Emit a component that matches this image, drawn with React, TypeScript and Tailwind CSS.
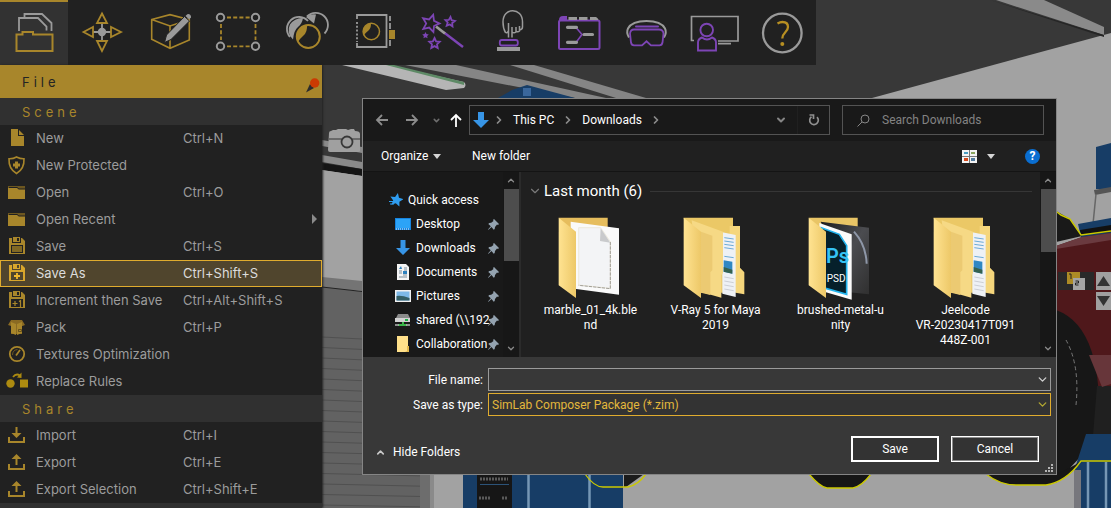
import type { ReactNode } from "react";
import { ChevronDown, ChevronRight, ChevronUp } from "lucide-react";

const GOLD = "#a8862b";
const GRAY = "#9a9a9a";
const PURPLE = "#7d45b5";

/* ---------- top toolbar ---------- */

function starPoints(cx: number, cy: number, r: number, turn = 0) {
  return Array.from({ length: 10 }, (_, i) => {
    const a = (Math.PI / 5) * i - Math.PI / 2 + turn;
    const d = i % 2 ? r * 0.48 : r;
    return `${(cx + d * Math.cos(a)).toFixed(1)},${(cy + d * Math.sin(a)).toFixed(1)}`;
  }).join(" ");
}

const tools: { label: string; icon: ReactNode }[] = [
  {
    label: "File",
    icon: (
      <>
        <path d="M24.5 17v-3h17.5l9.5 9v8M19 31V18h19l8.5 8.5v4" stroke={GRAY} strokeWidth="1.8" />
        <path d="M16.5 51V34.5h6V32h10.5v2.5h19.5V51z" stroke={GOLD} strokeWidth="2" />
      </>
    ),
  },
  {
    label: "Move",
    icon: (
      <>
        <path d="M34 23v18M25 32h18" stroke={GRAY} strokeWidth="1.8" />
        <circle cx="34" cy="32" r="4.2" fill={GRAY} />
        <path d="M34 13.5l5 9.5h-10zM34 51l-5-10h10zM15.5 32l9.5-5v10zM53 32l-10-5v10z" stroke={GOLD} strokeWidth="1.8" />
      </>
    ),
  },
  {
    label: "Edit",
    icon: (
      <>
        <path d="M15.7 19.5L34 14.700l19.3 5V40L34 48.3 15.7 39.3zM15.7 19.500L34 26l19.3-6.3M34 26v22" stroke={GOLD} strokeWidth="1.6" />
        <path d="M28.500 42.500l2-7.500L48.500 16.500l5 4.500L35 39.500z" fill={GRAY} stroke="#212121" strokeWidth="1" />
        <path d="M49.500 16l1.800-1.800q1.500-.6 2.800.5t.8 2.800L53.200 19.500z" fill={GRAY} />
      </>
    ),
  },
  {
    label: "Selection",
    icon: (
      <>
        <path d="M23 17.5h23M23 46.300h23M17 24v16M51.500 24v16" stroke={GOLD} strokeWidth="1.8" strokeDasharray="4 2.2" />
        {[16.5, 51.5].map((x) =>
          [17.5, 46.3].map((y) => (
            <circle key={`${x}-${y}`} cx={x} cy={y} r="3.7" stroke={GRAY} strokeWidth="2" />
          )),
        )}
      </>
    ),
  },
  {
    label: "Materials",
    icon: (
      <>
        <path d="M18 37a11.500 11.500 0 0 1 18-16" stroke={GRAY} strokeWidth="1.8" />
        <path d="M21 39.500a12 12 0 0 1-3-15q5-7 13-6.500-1 6-5 9t-5 12.500z" fill={GRAY} />
        <path d="M35 16.500a12 12 0 0 1 17.500 17" stroke={GRAY} strokeWidth="1.800" />
        <path d="M34 17q5-3.500 10-2.500l-2 9z" fill={GRAY} />
        <circle cx="36.300" cy="36.500" r="12.800" fill="#212121" />
        <circle cx="36.300" cy="36.500" r="11.500" stroke={GOLD} strokeWidth="2" />
        <path d="M26 42a12 12 0 0 1 9-17q.5 7-3.500 10.500T26 42z" fill={GOLD} />
      </>
    ),
  },
  {
    label: "Textures",
    icon: (
      <>
        <path d="M17 19v-4h29.500v32H17v-4" stroke={GRAY} strokeWidth="1.800" />
        <path d="M17 22v20" stroke={GRAY} strokeWidth="1.800" strokeDasharray="2 1.800" />
        <path d="M50 16v5M50 23v6M50 40v6" stroke={GRAY} strokeWidth="1.800" />
        <path d="M49 30h6v9h-6z" fill={GOLD} />
        <circle cx="31.300" cy="31.500" r="8.200" stroke={GOLD} strokeWidth="1.500" />
        <path d="M24 35a8 8 0 0 1 7-11.500q0 5-2.500 7T24 35z" fill={GOLD} />
      </>
    ),
  },
  {
    label: "Effects",
    icon: (
      <>
        <path d="M36 32.500L55 47" stroke={PURPLE} strokeWidth="2.400" />
        <path d="M28 26.500l9 7" stroke={GRAY} strokeWidth="2.800" />
        <polygon points={starPoints(22.5, 23.5, 9, 0.3)} stroke={PURPLE} strokeWidth="1.8" />
        <polygon points={starPoints(42, 22, 5, 0.1)} stroke={PURPLE} strokeWidth="1.8" />
        <polygon points={starPoints(26.5, 43.5, 5.5)} stroke={PURPLE} strokeWidth="1.8" />
        <polygon points={starPoints(17.5, 35.5, 3.5)} fill={PURPLE} />
      </>
    ),
  },
  {
    label: "Interaction",
    icon: (
      <>
        <path
          d="M32.500 37.500V23M36 37.500V27M32.500 31q-1.500 2.500-3 1.500-2.500-4-2.500-10.500C27 7 46.500 7 46.500 22v5q0 2.500-3 3v-4M43.500 27v4q-1.700 1.500-3.500 0v-4M40 28v4q-2 1.500-4 0"
          stroke={GRAY}
          strokeWidth="1.500"
        />
        <rect x="23.800" y="40" width="18" height="5.500" rx="2" stroke={PURPLE} strokeWidth="1.800" />
        <path d="M21 47h23v4H21z" fill={GRAY} />
      </>
    ),
  },
  {
    label: "Sequence",
    icon: (
      <>
        <rect x="15" y="20.500" width="40.500" height="28.500" rx="1.500" stroke={PURPLE} strokeWidth="2" />
        <path d="M15 20q0-4 4-4h4v4z" fill={PURPLE} />
        <path d="M24.500 17H33v3h-8.500zM35 17h8.500v3H35zM46 17h6q2 1 2.500 3H46z" fill={GRAY} />
        <path d="M32 27.500l6 7-6 8" stroke={PURPLE} strokeWidth="1.600" />
        <path d="M23.500 27.300h9M23.500 42.300h9M40 34.500h8.500" stroke={GRAY} strokeWidth="3.200" strokeLinecap="round" />
      </>
    ),
  },
  {
    label: "VR",
    icon: (
      <>
        <path d="M17 37.500q-3-5-1-9Q20 21 34.500 21T53 28.500q2 4-1 9" stroke={GRAY} strokeWidth="2" />
        <path d="M24 26.500h22" stroke={PURPLE} strokeWidth="2" strokeLinecap="round" />
        <path d="M22 29.500h25q4 0 4.500 4l-1 9q-.5 2.800-3 2.800h-8.500l-4.500-4-4.500 4H22q-2.500 0-3-2.800l-1-9q.5-4 4-4z" stroke={PURPLE} strokeWidth="1.800" />
      </>
    ),
  },
  {
    label: "Presentation",
    icon: (
      <>
        <path d="M14 40.500h-2.500v-24h46.500v24.500H38M38 43.700h13" stroke={GRAY} strokeWidth="1.700" />
        <circle cx="26.700" cy="30" r="6.300" fill="#212121" stroke={PURPLE} strokeWidth="1.900" />
        <path d="M22 37.500q-4 1.500-4 5v8h18v-8q0-3.500-4-5-5 4-10 0z" fill="#212121" stroke={PURPLE} strokeWidth="1.900" />
      </>
    ),
  },
  {
    label: "Help",
    icon: (
      <>
        <circle cx="34.300" cy="33" r="19.300" stroke={GRAY} strokeWidth="2.300" />
        <path d="M29.500 23.500q2.500-1.500 5-1.500c4 0 5.500 2.200 5.500 5 0 5-5.500 5-5.700 11.500" stroke="#b78f22" strokeWidth="2.300" />
        <circle cx="34.300" cy="44" r="2" fill="#b78f22" />
      </>
    ),
  },
];

function Toolbar() {
  return (
    <nav className="flex h-[65px] w-fit bg-[#212121]" aria-label="Main toolbar">
      {tools.map((tool, i) => (
        <button
          key={tool.label}
          type="button"
          aria-label={tool.label}
          className={i === 0 ? "bg-[#323232] shadow-[inset_0_2px_0_#a8862b]" : ""}
        >
          <svg width="68" height="65" viewBox="0 0 68 65" fill="none">
            {tool.icon}
          </svg>
        </button>
      ))}
    </nav>
  );
}

/* ---------- file menu ---------- */

const floppy = (
  <>
    <path d="M1 1h13l3 3v13H1z" fill={GOLD} />
    <path d="M4 0h9v6H4z" fill="#212121" />
    <path d="M5 0h7v5H5z" fill={GOLD} />
    <path d="M9 1h2v3H9z" fill="#212121" />
  </>
);

const menuIcons: Record<string, ReactNode> = {
  file: (
    <>
      <path d="M3 0h7v7h6v10H3z" fill={GOLD} />
      <path d="M11 1l5 5h-5z" fill={GOLD} />
    </>
  ),
  shield: (
    <>
      <path d="M8.500 1q4 2 7.500 1.800Q16.500 13 8.500 17.500 .5 13 1 2.800 5 3 8.500 1z" stroke={GOLD} strokeWidth="1.600" />
      <path d="M7 5.500h3v2h2v3h-2v2H7v-2H5v-3h2z" fill={GOLD} />
    </>
  ),
  folder: (
    <>
      <path d="M0 3h17v3H0z" fill="#6d5720" />
      <path d="M0 5h2l1-1h6l1 2h7v10H0z" fill={GOLD} />
      <path d="M1 4.500h8.500l1 1.500H17" stroke="#212121" fill="none" />
    </>
  ),
  save: (
    <>
      {floppy}
      <path d="M3 8h12v8H3z" fill="#212121" />
      <path d="M4 9h10v6H4z" fill="#806824" />
    </>
  ),
  saveAs: (
    <>
      <path d="M1 1h13l3 3v13H1z" fill="#d8a62c" />
      <path d="M4 0h9v6H4zM3 8h12v8H3z" fill="#50452d" />
      <path d="M5 0h7v5H5z" fill="#d8a62c" />
      <path d="M9 1h2v3H9z" fill="#50452d" />
      <path d="M9 9v6M6 12h6" stroke="#f2b92e" strokeWidth="1.800" />
    </>
  ),
  increment: (
    <>
      {floppy}
      <path d="M3 8h12v8H3z" fill="#212121" />
      <path d="M7 10v5M4.500 12.500h5M11 10.500l1.500-1V16" stroke={GOLD} strokeWidth="1.200" />
    </>
  ),
  pack: (
    <>
      <path d="M3 2h11l3 5-2.500 1H14v8H3V8L0 7z" fill="#8a6a22" />
      <path d="M3 4l5 2v11l-5-2zM9 6l5-2v11l-5 2z" fill={GOLD} />
      <path d="M10.500 11.500h3v2h-3z" stroke="#59461b" strokeWidth=".8" />
    </>
  ),
  gauge: (
    <>
      <circle cx="9" cy="9" r="7.200" stroke={GOLD} strokeWidth="1.800" />
      <path d="M8 10.500l4-5.500" stroke={GOLD} strokeWidth="1.700" />
      <path d="M4.500 10q0-5 5-5.500" stroke="#6d5720" strokeWidth="1" />
    </>
  ),
  replace: (
    <>
      <circle cx="2.500" cy="11.500" r="4.200" fill="#ad8b10" />
      <path d="M12 7.500h8v8h-8z" fill="#ad8b10" />
      <path d="M5 5q3-4 7-1.500" stroke="#ad8b10" strokeWidth="1.800" />
      <path d="M13.500.500v5.500L9 5.500z" fill="#ad8b10" />
    </>
  ),
  import: (
    <>
      <path d="M1 11v5h15v-5" stroke={GOLD} strokeWidth="2" />
      <path d="M7.500 1h2v6h4l-5 5-5-5h4z" fill={GOLD} />
    </>
  ),
  export: (
    <>
      <path d="M1 11v5h15v-5" stroke={GOLD} strokeWidth="2" />
      <path d="M7.500 12h2V6h4l-5-5-5 5h4z" fill={GOLD} />
    </>
  ),
};

type MenuItem = { icon: string; label: string; keys?: string; sub?: boolean; active?: boolean };

const sceneItems: MenuItem[] = [
  { icon: "file", label: "New", keys: "Ctrl+N" },
  { icon: "shield", label: "New Protected" },
  { icon: "folder", label: "Open", keys: "Ctrl+O" },
  { icon: "folder", label: "Open Recent", sub: true },
  { icon: "save", label: "Save", keys: "Ctrl+S" },
  { icon: "saveAs", label: "Save As", keys: "Ctrl+Shift+S", active: true },
  { icon: "increment", label: "Increment then Save", keys: "Ctrl+Alt+Shift+S" },
  { icon: "pack", label: "Pack", keys: "Ctrl+P" },
  { icon: "gauge", label: "Textures Optimization" },
  { icon: "replace", label: "Replace Rules" },
];

const shareItems: MenuItem[] = [
  { icon: "import", label: "Import", keys: "Ctrl+I" },
  { icon: "export", label: "Export", keys: "Ctrl+E" },
  { icon: "export", label: "Export Selection", keys: "Ctrl+Shift+E" },
];

function MenuHeading({ children }: { children: ReactNode }) {
  return <h3 className="flex h-[27px] items-center bg-[#303030] pl-[22px] tracking-[4px] text-[#a8862b]">{children}</h3>;
}

function MenuRow({ item }: { item: MenuItem }) {
  return (
    <button
      type="button"
      className={`flex h-[27px] w-full items-center border pr-1 pb-px pl-[7px] text-left ${
        item.active ? "border-[#e0ac2e] bg-[#50452d] text-[#dcdcdc]" : "border-transparent text-[#9c9c9c]"
      }`}
    >
      <svg width="18" height="18" viewBox="0 0 18 18" fill="none" className="shrink-0 overflow-visible">
        {menuIcons[item.icon]}
      </svg>
      <span className="ml-2.5 w-[147px] shrink-0 whitespace-nowrap">{item.label}</span>
      <span className="whitespace-nowrap">{item.keys}</span>
      {item.sub && (
        <svg width="5" height="10" viewBox="0 0 5 10" className="ml-auto">
          <path d="M0 0l5 5-5 5z" fill="#8a8a8a" />
        </svg>
      )}
    </button>
  );
}

function FileMenu() {
  return (
    <aside className="w-[322px] shrink-0 bg-[#212121] font-[Inter,sans-serif] text-[13px] leading-4 shadow-[1px_0_2px_#222]">
      <div className="flex h-[33px] items-center justify-between bg-[#a8862b] pr-0.5 pl-[22px]">
        <h2 className="tracking-[4px] text-[#242424]">File</h2>
        <button type="button" aria-label="Pin menu" className="mt-2">
          <svg width="14" height="15" viewBox="0 0 14 15">
            <path d="M0 14.500L4 6l4 4z" fill="#2c2c2c" />
            <circle cx="8.700" cy="5" r="4.700" fill="#cb3a02" />
          </svg>
        </button>
      </div>
      <MenuHeading>Scene</MenuHeading>
      {sceneItems.map((item) => (
        <MenuRow key={item.label} item={item} />
      ))}
      <MenuHeading>Share</MenuHeading>
      {shareItems.map((item) => (
        <MenuRow key={item.label} item={item} />
      ))}
      <div className="h-[5px] bg-[#303030]" />
    </aside>
  );
}

/* ---------- save dialog ---------- */

function Caret() {
  return (
    <svg width="8" height="5" viewBox="0 0 8 5">
      <path d="M0 0h8L4 5z" fill="#d5d5d5" />
    </svg>
  );
}

function ArrowIcon({ d, color }: { d: string; color: string }) {
  return (
    <svg width="14" height="14" viewBox="0 0 14 14" fill="none">
      <path d={d} stroke={color} strokeWidth="1.8" />
    </svg>
  );
}

function Crumb({ children }: { children: string }) {
  return (
    <>
      <ChevronRight size={12} strokeWidth={3.5} color="#8c8c8c" className="shrink-0" />
      <a href={`#${children}`} className="mr-2 ml-2">{children}</a>
    </>
  );
}

function AddressBar() {
  return (
    <div className="flex h-[42px] items-center bg-[#191919] pr-3 pl-3">
      <div className="flex w-[94px] shrink-0 items-center justify-between pr-1.5">
        <button type="button" aria-label="Back">
          <ArrowIcon d="M13 7H2M7 2L2 7l5 5" color="#8c8c8c" />
        </button>
        <button type="button" aria-label="Forward" className="ml-2">
          <ArrowIcon d="M1 7h11M7 2l5 5-5 5" color="#8c8c8c" />
        </button>
        <button type="button" aria-label="Recent locations" className="ml-1.5">
          <ChevronDown size={9} strokeWidth={4} color="#6e6e6e" />
        </button>
        <button type="button" aria-label="Up">
          <ArrowIcon d="M7 14V2M2 7l5-5 5 5" color="#ffffff" />
        </button>
      </div>
      <div className="flex h-[30px] grow items-center border border-[#535353] pl-[3px]">
        <svg width="16" height="16" viewBox="0 0 16 16" className="mr-1 shrink-0">
          <path d="M5 0h6v8h5l-8 8-8-8h5z" fill="#3795e6" />
        </svg>
        <Crumb>This PC</Crumb>
        <Crumb>Downloads</Crumb>
        <ChevronRight size={12} strokeWidth={3.5} color="#8c8c8c" className="shrink-0" />
        <button type="button" aria-label="Previous locations" className="mr-2.5 ml-auto">
          <ChevronDown size={12} strokeWidth={4} color="#858585" />
        </button>
        <button type="button" aria-label="Refresh" className="flex h-full w-8 items-center justify-center border-l border-[#202020]">
          <svg width="12" height="12" viewBox="0 0 12 12" fill="none">
            <path d="M3.500 2.800A4.300 4.300 0 1 0 9 3.200M1.500 1h4v4" stroke="#8f8f8f" strokeWidth="1.700" />
          </svg>
        </button>
      </div>
      <label className="ml-3 flex h-[30px] w-[202px] shrink-0 items-center border border-[#535353]">
        <svg width="13" height="13" viewBox="0 0 13 13" fill="none" className="ml-3.5 shrink-0">
          <circle cx="8" cy="5" r="4" stroke="#858585" />
          <path d="M5 8l-4.500 4.500" stroke="#858585" />
        </svg>
        <input
          type="search"
          aria-label="Search Downloads"
          placeholder="Search Downloads"
          className="ml-3 w-full min-w-0 bg-transparent outline-none placeholder:text-[#838383]"
        />
      </label>
    </div>
  );
}

function CommandBar() {
  return (
    <div className="flex h-[31px] items-center border-b border-[#141414] bg-[#202020] pr-4 pl-[18px]">
      <button type="button" className="flex w-[60px] items-center justify-between">
        Organize <Caret />
      </button>
      <button type="button" className="ml-[31px]">New folder</button>
      <button type="button" aria-label="Change view" className="ml-auto flex items-center gap-2.5">
        <svg width="15" height="13" viewBox="0 0 15 13">
          <path d="M0 0h15v13H0z" fill="#f3f3f3" />
          <path d="M7 0h1v13H7zM0 6h15v1H0z" fill="#777" />
          <path d="M2 2h4v2H2z" fill="#4a9cc0" />
          <path d="M9 2h4v2H9z" fill="#8ba55d" />
          <path d="M2 8h4v3H2z" fill="#d6471a" />
          <path d="M9 8h4v3H9z" fill="#527c9f" />
        </svg>
        <Caret />
      </button>
      <button type="button" aria-label="Help" className="ml-[30px] flex size-[15px] items-center justify-center rounded-full bg-[#0a6ed1] text-xs leading-3 font-bold">
        ?
      </button>
    </div>
  );
}

const places: { label: string; icon: ReactNode }[] = [
  {
    label: "Desktop",
    icon: (
      <>
        <path d="M0 2h16v12H0z" fill="#1684e0" />
        <path d="M1 3h14v9H1z" fill="#2ca3f7" />
        <path d="M1 13h14" stroke="#e8f4ff" strokeWidth="1" strokeDasharray="1 1" />
      </>
    ),
  },
  { label: "Downloads", icon: <path d="M5.500 0h5v8H15l-7 7-7-7h4.500z" fill="#3795e6" /> },
  {
    label: "Documents",
    icon: (
      <>
        <path d="M2 0h9l3 3v13H2z" fill="#f4f4f4" />
        <path d="M4 7h3M4 9h3M9 4h3M9 6h3M4 13h8M8 11h4" stroke="#7a8b99" />
        <path d="M4 5l2-3 1 3zM8 7h4v3H8z" fill="#2d80bd" />
      </>
    ),
  },
  {
    label: "Pictures",
    icon: (
      <>
        <path d="M0 2h16v12H0z" fill="#f1f1f1" />
        <path d="M1.500 3.500h13v9h-13z" fill="#7db9e8" />
        <path d="M1.500 8q5-1 13 2v2.500h-13z" fill="#345f66" />
      </>
    ),
  },
  {
    label: "shared (\\\\192",
    icon: (
      <>
        <path d="M3 2h10l2 4H1z" fill="#8b8b8b" />
        <path d="M0 6h15v4H0z" fill="#d3d3d3" />
        <path d="M10 7h3v2h-3z" fill="#23b14d" />
        <path d="M7 10h2v2h3v2H3v-2h4z" fill="#3cb44b" />
        <path d="M0 13h4M11 13h4" stroke="#b5b5b5" strokeWidth="1.500" />
      </>
    ),
  },
  {
    label: "Collaboration",
    icon: (
      <>
        <path d="M2 0h11v16H2z" fill="#ffe08a" />
        <path d="M12 10h2v6h-4l2-1z" fill="#e3b94f" />
      </>
    ),
  },
];

function ScrollBar({ thumb }: { thumb: string }) {
  return (
    <div className="flex w-4 shrink-0 flex-col items-center bg-[#171717]" aria-hidden="true">
      <ChevronUp size={17} strokeWidth={3} color="#8a8a8a" className="h-[17px] w-2.5 shrink-0" />
      <div className={`w-[15px] bg-[#4d4d4d] ${thumb}`} />
      <ChevronDown size={17} strokeWidth={3} color="#8a8a8a" className="mt-auto h-[17px] w-2.5 shrink-0" />
    </div>
  );
}

function PlacesPane() {
  return (
    <div className="flex w-[158px] shrink-0 border-r-2 border-[#2b2b2b] bg-[#191919]">
      <ul className="min-w-0 grow pt-4">
        <li>
          <a href="#quick-access" className="flex h-6 items-center pl-[26px]">
            <svg width="14" height="14" viewBox="0 0 14 14" className="mr-[5px] shrink-0">
              <polygon points={starPoints(7.5, 7, 7, 0.2)} fill="#2f9df0" />
              <path d="M0 8.500h4M1 11h4" stroke="#2f9df0" />
            </svg>
            Quick access
          </a>
        </li>
        {places.map((place) => (
          <li key={place.label}>
            <a href={`#${place.label}`} className="flex h-6 items-center pl-8">
              <svg width="16" height="16" viewBox="0 0 16 16" className="mr-[5px] shrink-0">
                {place.icon}
              </svg>
              <span className="w-[72px] whitespace-nowrap">{place.label}</span>
              <svg width="11" height="11" viewBox="0 0 11 11" className="shrink-0">
                <path d="M6 0l5 5-1 1-1-.4L7 8l-.3 2-1 .8L3.500 8 .5 10.800 0 10.500 2.800 7.300 .3 5l.9-1 2-.2L5.500 2 5 1z" fill="#94a3b0" />
              </svg>
            </a>
          </li>
        ))}
      </ul>
      <ScrollBar thumb="h-[72px]" />
    </div>
  );
}

const frontFlap = <path d="M2 2l52 42v199L2 205z" fill="url(#flap)" />;

function FolderDefs() {
  return (
    <svg width="0" height="0" className="absolute">
      <defs>
        <linearGradient id="flap" x1="0" x2="1">
          <stop offset="0" stopColor="#ffe391" />
          <stop offset="1" stopColor="#edc868" />
        </linearGradient>
        <linearGradient id="glass" x1="0" y1="0" x2="1" y2="1">
          <stop offset="0" stopColor="#1c1c1e" />
          <stop offset=".5" stopColor="#4b4c50" />
          <stop offset="1" stopColor="#303030" />
        </linearGradient>
      </defs>
    </svg>
  );
}

const nestedFolder = (
  <>
    <path d="M2 2h148v225H40z" fill="#ebc866" />
    <path d="M140 27h31v125l13 14v66l-44-8z" fill="#f5d67c" />
    <path d="M118 46l40 8v186l-40-10z" fill="#eef1f5" />
    <path d="M124 62l28 4M124 72l28 4M124 82l28 4M124 92l28 4M124 118l28 4" stroke="#6cabd8" strokeWidth="3" />
    <path d="M122 130l26 4v36l-26-6z" fill="#2f87c3" />
    <path d="M122 150l26 8v12l-26-6z" fill="#35614f" />
    <path d="M124 180l28 5M124 192l28 5M124 204l28 5M124 216l28 5" stroke="#b9bdc4" strokeWidth="2" />
    <path d="M26 10l94 34v124l-5 6v68L54 225z" fill="#f6d985" />
    <path d="M54 44l34 12v104l-6 6v68l-28-7z" fill="#ecca72" />
  </>
);

const files: { name: string; art: ReactNode }[] = [
  {
    name: "marble_01_4k.ble\nnd",
    art: (
      <>
        <path d="M2 2h147v60H40z" fill="#e6bd5d" />
        <path d="M38 14l145 20v199L38 214z" fill="#fafafa" />
        <path d="M62 32h66l29 42v140l-95-10z" fill="#f3f4f6" stroke="#e3dcc2" strokeWidth="1.500" />
        <path d="M157 75v140l-95-10" fill="none" stroke="#77746c" strokeWidth="2" strokeDasharray="10 3" />
        <path d="M128 34l29 43-31-5z" fill="#c9cacc" />
      </>
    ),
  },
  { name: "V-Ray 5 for Maya\n2019", art: nestedFolder },
  {
    name: "brushed-metal-u\nnity",
    art: (
      <>
        <path d="M2 2h147v50H40z" fill="#e9c566" />
        <path d="M38 14l145 18v200l-60-6z" fill="url(#glass)" />
        <path d="M138 44q36 40 38 96" stroke="#8e97a8" strokeWidth="6" fill="none" />
        <path d="M34 18l97 34v196l-90-26z" fill="#fbfbfb" />
        <path d="M40 32l54 20 22 34v146l-76-22z" fill="#06202b" stroke="#23b4ee" strokeWidth="5" />
        <text x="54" y="138" fontSize="60" fontWeight="600" fill="#35c3f5" fontFamily="Roboto, sans-serif" className="[font-family:Roboto]">
          Ps
        </text>
        <text x="56" y="194" fontSize="30" fill="#ffffff" fontFamily="Roboto, sans-serif">
          PSD
        </text>
      </>
    ),
  },
  { name: "Jeelcode\nVR-20230417T091\n448Z-001", art: nestedFolder },
];

function FileGrid() {
  return (
    <div className="min-w-0 grow overflow-hidden pl-[7px]">
      <button type="button" className="mt-2 flex h-[22px] w-full items-center pr-2 text-[15px]">
        <ChevronDown size={14} strokeWidth={2} color="#7a7a7a" />
        <span className="ml-0.5">Last month (6)</span>
        <span className="ml-2 h-px grow bg-[#363636]" />
      </button>
      <ul className="grid grid-cols-[repeat(4,125px)] pt-[15px]">
        {files.map((file) => (
          <li key={file.name}>
            <a href={`#${file.name}`} className="flex flex-col items-center text-center">
              <svg width="66" height="84" viewBox="0 0 198 252" className="overflow-visible">
                {file.art}
                {frontFlap}
              </svg>
              <span className="mt-0.5 leading-[15px] whitespace-pre">{file.name}</span>
            </a>
          </li>
        ))}
      </ul>
    </div>
  );
}

function SizeGrip() {
  return (
    <svg width="8" height="8" viewBox="0 0 8 8" className="absolute right-[3px] bottom-0.5">
      <path d="M6 0h2v2H6zM3 3h2v2H3zM6 3h2v2H6zM0 6h2v2H0zM3 6h2v2H3zM6 6h2v2H6z" fill="#b5b5b5" />
    </svg>
  );
}

function SaveDialog() {
  return (
    <section
      role="dialog"
      aria-label="Save As"
      className="relative border border-[#858585] bg-[#383838] font-[Roboto,sans-serif] text-xs leading-4 text-white"
    >
      <FolderDefs />
      <AddressBar />
      <CommandBar />
      <div className="flex h-[185px] bg-[#202020]">
        <PlacesPane />
        <FileGrid />
        <ScrollBar thumb="h-[63px]" />
      </div>
      <div className="grid grid-cols-[120px_1fr] items-center gap-x-[5px] gap-y-0.5 pt-[11px] pr-[5px]">
        <label htmlFor="file-name" className="text-right">File name:</label>
        <div className="relative">
          <input id="file-name" type="text" className="block h-[23px] w-full border border-[#9b9b9b] bg-[#383838] px-[3px] outline-none" />
          <ChevronDown size={13} strokeWidth={2.5} color="#cfcfcf" className="absolute top-[5px] right-0.5" />
        </div>
        <label htmlFor="file-type" className="text-right">Save as type:</label>
        <div className="relative">
          <select
            id="file-type"
            className="block h-[23px] w-full appearance-none border border-[#e0ac2e] bg-[#333] px-[3px] text-[#e3b83c] outline-none"
          >
            <option>SimLab Composer Package (*.zim)</option>
          </select>
          <ChevronDown size={13} strokeWidth={2.5} color="#b3a832" className="pointer-events-none absolute top-[5px] right-0.5" />
        </div>
      </div>
      <div className="flex items-center pt-5 pr-[17px] pb-3 pl-3">
        <button type="button" className="mt-1.5 flex items-center gap-[7px]">
          <ChevronUp size={11} strokeWidth={3.5} color="#c9c9c9" />
          Hide Folders
        </button>
        <button type="button" className="ml-auto h-[26px] w-[88px] border-2 border-white bg-[#333]">Save</button>
        <button type="button" className="ml-3 h-[26px] w-[88px] border border-white bg-[#333] shadow-[inset_0_0_0_1px_#8d8d8d]">Cancel</button>
      </div>
      <SizeGrip />
    </section>
  );
}

/* ---------- 3D viewport ---------- */

function Viewport() {
  return (
    <svg viewBox="0 0 1111 508" preserveAspectRatio="xMinYMin slice" className="absolute inset-0 -z-10 size-full" fill="none" aria-hidden="true">
      <path d="M0 0h1111v508H0z" fill="#a2a2a2" />
      <path d="M0 0h1111v33L872 98 362 175 322 170z" fill="#383838" />
      <path d="M996 0h48l60 27v8z" fill="#8a8a8a" />
      <path d="M990 0l114 35v2z" fill="#252525" />
      {/* ceiling lights and beams */}
      <path d="M405 65h51l150 33h-31z" fill="#858585" />
      <path d="M510 65h24l112 33h-30z" fill="#858585" />
      <path d="M342 65h46l76 17q3 3 0 6l-18 2z" fill="#b5b5b5" />
      <path d="M386 65h8l70 17v3z" fill="#5e8a66" />
      <path d="M498 98l14-8 15-5 48 13z" fill="#173d66" />
      <path d="M523 88h8v8h-8z" fill="#3a679c" />
      <path d="M322 140l40 7v6l-40-7z" fill="#8a8a8a" />
      <path d="M322 155l40 7v7l-40-7z" fill="#8a8a8a" />
      <path d="M322 163l40 6v7l-40-6z" fill="#151515" />
      <path d="M322 170l40 6v105l-40-4z" fill="#a2a2a2" />
      <path d="M322 277l40 4v10l-40-3z" fill="#747474" />
      <path d="M322 287l40 4.500 71 8V508H322z" fill="#626262" />
      <path d="M322 287l40 4.500" stroke="#222" />
      {Array.from({ length: 17 }, (_, i) => (
        <path key={i} d={`M322 ${337 + i * 10.5}l100 ${5 - i * 0.2}`} stroke="#505050" />
      ))}
      <path d="M420 470h10v38h-10z" fill="#6d6d6d" />
      <path d="M430 470h4v38h-4z" fill="#8a8a8a" />
      {/* camera marker */}
      <path d="M329 133q0-2 2-2l2-1h3l2-1h8l2 1 3-1h3l1 2q5 0 5 3v17q0 1-2 1h-28q-2 0-2-2z" fill="#a0a0a0" />
      <path d="M329 139h32" stroke="#333" />
      <circle cx="347" cy="142" r="5.500" fill="#a0a0a0" stroke="#383838" strokeWidth="1.800" />
      {/* blue cabinet under the dialog */}
      <path d="M463 470h160v38H463z" fill="#173d66" />
      <path d="M477 470h35v38h-35z" fill="#161616" />
      <path d="M480 479h28M479 498h11M502 498h6" stroke="#5a5a5a" strokeWidth="3" strokeDasharray="2 1" />
      <path d="M480 484.500h29" stroke="#2c5378" />
      <path d="M528.500 474v34M589.500 474v34" stroke="#7697b5" strokeWidth="2.500" />
      <path d="M624 474h20l-18 13h-2z" fill="#1b1b1b" />
      <path d="M585 474q9 13 18 13h25q10-2 18-13" stroke="#cbc900" strokeWidth="1.300" />
      {/* wheels */}
      <path d="M809 474q11 13 18 14h26q9-2 18-14z" fill="#161616" stroke="#cbc900" strokeWidth="1.300" />
      {/* blue seat and truck body */}
      <path d="M1096 147l15-4v46h-15z" fill="#173d66" />
      <path d="M1094 190l17-3v5l-16 3z" fill="#555" />
      <path d="M1096 194l-3 30" stroke="#666" strokeWidth="1.500" />
      <path d="M1078 224l33-6v19l-30 0z" fill="#173d66" />
      <path d="M1080 230l31-5v7l-30 3z" fill="#111" />
      <path d="M1056 211l14 8 12 17-26 6z" fill="#191919" />
      <path d="M1056 246l26-9 29-4v165h-55z" fill="#4f181b" />
      <path d="M1056 246l26-9 29-4v7l-55 9z" fill="#6a3a3f" />
      <path d="M1056 310q50 18 42 128l-42 45z" fill="#171717" />
      <path d="M1066 340q14 25 10 65" stroke="#777" strokeDasharray="4 3" />
      <path d="M1097 386h14v50h-18z" fill="#202020" />
      <path d="M1089 355l13 32 9-3v-29z" fill="#67363a" />
      <path d="M1086 434h25v74h-36v-40z" fill="#173d66" />
      <path d="M1074 470h7v38h-7z" fill="#77777d" />
      <path d="M1088 462v46M1106 462v46" stroke="#7697b5" strokeWidth="2.500" />
      <path d="M986 474q14 11 30 11h30q20-3 35-24-8 6-25 13z" fill="#161616" />
      <path d="M986 474q14 11 30 11h30q20-3 35-24h30" stroke="#cbc900" strokeWidth="1.300" />
      <path d="M1057 212l4 3 9 4 11 16 30-4" stroke="#cbc900" strokeWidth="1.500" />
    </svg>
  );
}

function StepControls() {
  return (
    <div className="absolute top-[272px] right-0 flex items-start gap-0.5">
      <button type="button" aria-label="Order" className="flex h-[18px] w-9 items-center justify-center bg-[#292929]">
        <svg width="19" height="18" viewBox="0 0 19 18">
          <path d="M0 0h13v12H0z" fill="#ad8b25" />
          <path d="M6 6h12v12H6z" fill="#a5a5a5" />
          <path d="M2 2h2v5M8.500 9h3v2h-3v2h3" stroke="#222" fill="none" />
        </svg>
      </button>
      <div className="flex flex-col gap-0.5">
        <button type="button" aria-label="Previous" className="flex h-[18px] w-[15px] items-center justify-center bg-[#a0a0a0]">
          <svg width="13" height="10" viewBox="0 0 13 10">
            <path d="M6.500 0L13 10H0z" fill="#333" />
          </svg>
        </button>
        <button type="button" aria-label="Next" className="flex h-[18px] w-[15px] items-center justify-center bg-[#a0a0a0]">
          <svg width="13" height="10" viewBox="0 0 13 10">
            <path d="M6.500 10L13 0H0z" fill="#333" />
          </svg>
        </button>
      </div>
    </div>
  );
}

export default function App() {
  return (
    <main className="relative isolate min-h-screen overflow-hidden">
      <Viewport />
      <Toolbar />
      <div className="flex">
        <FileMenu />
        <div className="min-w-0 grow pt-[33px] pr-[54px] pl-10">
          <SaveDialog />
        </div>
      </div>
      <StepControls />
    </main>
  );
}
